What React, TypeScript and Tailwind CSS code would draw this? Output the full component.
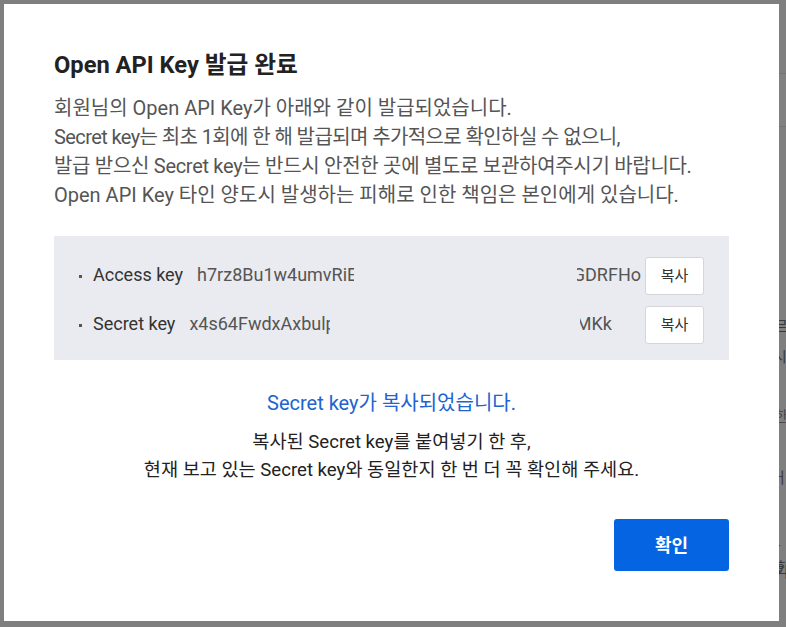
import React from "react";

const FONT = { fontFamily: "Roboto, 'Noto Sans CJK KR', sans-serif" };

function KeyRow({
  label,
  value,
  leftW,
  rightW,
  rightGap,
}: {
  label: string;
  value: string;
  leftW: number;
  rightW: number;
  rightGap: number;
}) {
  return (
    <div className="flex items-center h-[38px]">
      <span className="w-[14px] flex items-center">
        <span className="block w-[3px] h-[3px] bg-[#555]" />
      </span>
      <span className="text-[18px] text-[#333] whitespace-nowrap -mt-[4px]">{label}</span>
      <span
        className="ml-[14px] overflow-hidden whitespace-nowrap text-[18px] text-[#555] -mt-[4px]"
        style={{ width: leftW }}
      >
        {value}
      </span>
      <span className="flex-1" />
      <span
        className="overflow-hidden whitespace-nowrap text-[18px] text-[#555] flex justify-end -mt-[4px]"
        style={{ width: rightW, marginRight: rightGap }}
      >
        <span className="shrink-0">{value}</span>
      </span>
      <button className="w-[59px] h-[38px] bg-white border border-[#d4d6db] rounded-[3px] text-[15px] text-[#333]">
        복사
      </button>
    </div>
  );
}

export default function App() {
  return (
    <div className="relative w-[786px] h-[627px] bg-[#7f7f7f] overflow-hidden" style={FONT}>
      {/* background page fragments behind overlay */}
      <div className="absolute left-[779px] top-[73px] w-[20px] h-[54px] border-y border-[#757575] bg-[#818181]" />
      <span className="absolute left-[774px] top-[316px] text-[15px] text-[#3a3a3a]">르</span>
      <span className="absolute left-[773px] top-[346px] text-[15px] text-[#3a3a3a]">시</span>
      <span className="absolute left-[774px] top-[406px] text-[15px] text-[#4a4a4a]">한</span>
      <span className="absolute left-[771px] top-[467px] text-[15px] text-[#3a3a3a]">커</span>
      <span className="absolute left-[776px] top-[534px] text-[15px] text-[#3a3a3a]">-한</span>
      <span className="absolute left-[775px] top-[561px] text-[15px] text-[#3a3a3a]">기</span>

      {/* modal */}
      <div className="absolute left-[4px] top-[4px] w-[775px] h-[617px] bg-white px-[50px] pt-[46px] pb-[50px] flex flex-col">
        <h1 className="text-[23.7px] leading-[30px] font-bold text-[#222]">Open API Key 발급 완료</h1>
        <div className="mt-[14px] text-[20px] leading-[29px] text-[#555]">
          <p>회원님의 Open API Key가 아래와 같이 발급되었습니다.</p>
          <p className="tracking-[-0.6px]">Secret key는 최초 1회에 한 해 발급되며 추가적으로 확인하실 수 없으니,</p>
          <p className="tracking-[-0.3px]">발급 받으신 Secret key는 반드시 안전한 곳에 별도로 보관하여주시기 바랍니다.</p>
          <p>Open API Key 타인 양도시 발생하는 피해로 인한 책임은 본인에게 있습니다.</p>
        </div>

        <div className="mt-[26px] h-[124px] bg-[#e9ebf0] pl-[25px] pr-[25px] pt-[21px] flex flex-col gap-[11px]">
          <KeyRow
            label="Access key"
            value="h7rz8Bu1w4umvRiEaQk3sPzN2GDRFHo"
            leftW={157}
            rightW={64}
            rightGap={4}
          />
          <KeyRow
            label="Secret key"
            value="x4s64FwdxAxbulpQ9cTzWvMKk"
            leftW={141}
            rightW={32}
            rightGap={33}
          />
        </div>

        <p className="mt-[29px] text-center text-[20px] leading-[28px] text-[#2163cf]">
          Secret key가 복사되었습니다.
        </p>
        <div className="mt-[11px] text-center text-[18.6px] leading-[28px] text-[#222]">
          <p>복사된 Secret key를 붙여넣기 한 후,</p>
          <p>현재 보고 있는 Secret key와 동일한지 한 번 더 꼭 확인해 주세요.</p>
        </div>

        <div className="mt-auto flex justify-end">
          <button className="w-[115px] h-[52px] bg-[#0564e1] rounded-[3px] text-white text-[18px] font-bold">
            확인
          </button>
        </div>
      </div>
    </div>
  );
}
